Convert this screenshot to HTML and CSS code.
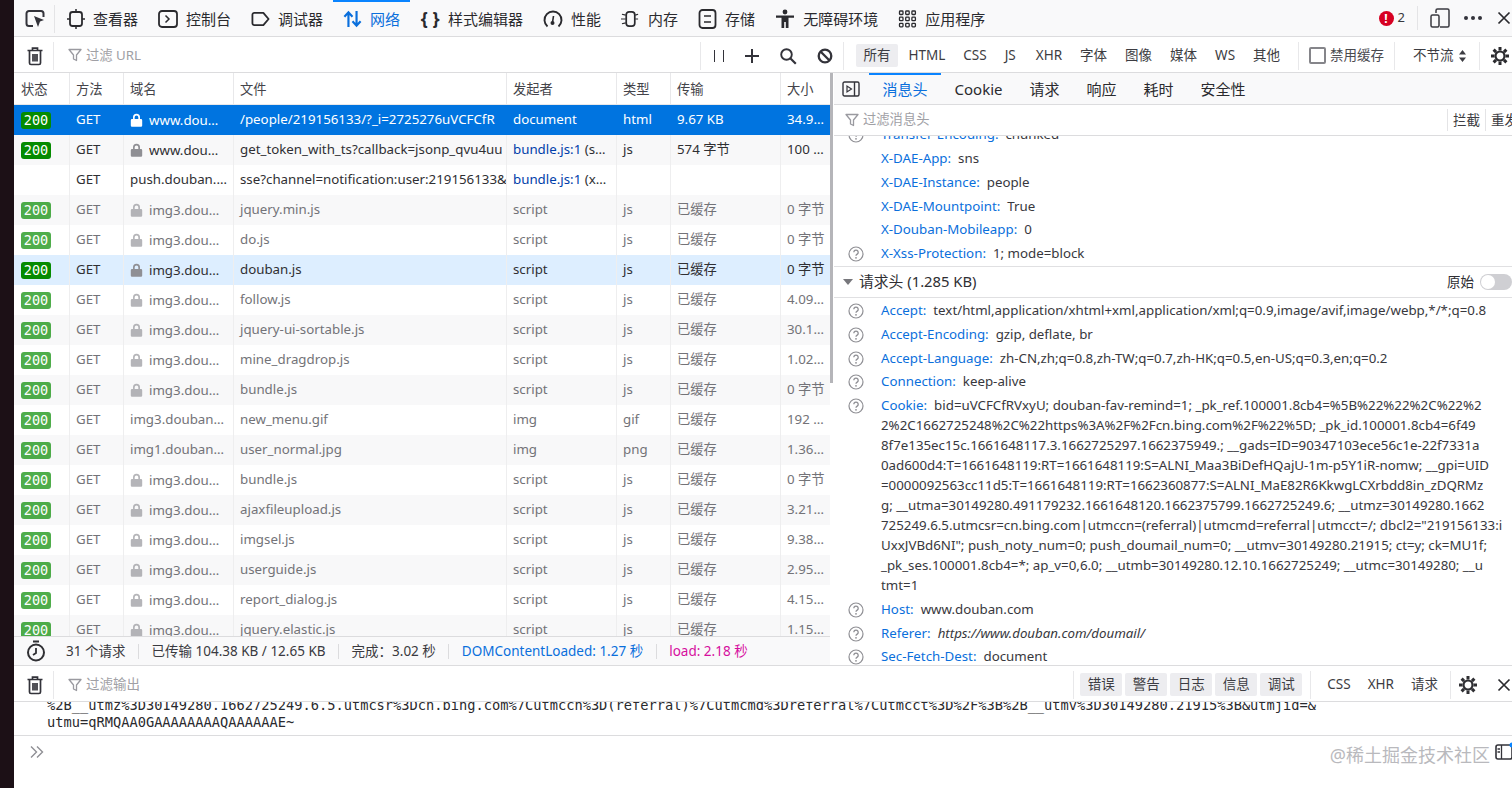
FILE: index.html
```html
<!DOCTYPE html>
<html lang="zh-CN">
<head>
<meta charset="utf-8">
<title>网络</title>
<link rel="stylesheet" href="styles.css">
</head>
<body>
<svg class="defs" width="0" height="0">
  <symbol id="lock" viewBox="0 0 13 14"><path d="M3 6V4.2a3.5 3.5 0 0 1 7 0V6h1a1.2 1.2 0 0 1 1.2 1.2v5.3A1.3 1.3 0 0 1 11 13.8H2A1.3 1.3 0 0 1 .8 12.500V7.200A1.200 1.200 0 0 1 2 6zm1.700 0h3.600V4.200a1.800 1.800 0 0 0-3.600 0z" fill="currentColor" fill-rule="evenodd"/></symbol>
  <symbol id="help" viewBox="0 0 16 16"><circle cx="8" cy="8" r="7" fill="none" stroke="currentColor" stroke-width="1.200"/><path d="M5.800 6.200a2.200 2.200 0 1 1 3.400 1.900c-.8.5-1.200.9-1.200 1.700" fill="none" stroke="currentColor" stroke-width="1.300"/><circle cx="8" cy="11.800" r=".9" fill="currentColor"/></symbol>
  <symbol id="funnel" viewBox="0 0 14 14"><path d="M1 1.500h12L8.500 7v5.500l-3-1.500V7z" fill="none" stroke="currentColor" stroke-width="1.300" stroke-linejoin="round"/></symbol>
  <symbol id="trash" viewBox="0 0 18 20"><path d="M1.500 4.500h15M6.500 4V2.200h5V4M3.500 5v12a1.500 1.500 0 0 0 1.500 1.500h8a1.500 1.500 0 0 0 1.500-1.500V5M7 8v7.500M9 8v7.500M11 8v7.500" fill="none" stroke="currentColor" stroke-width="1.700"/></symbol>
  <symbol id="gear" viewBox="0 0 20 20"><path d="M10 1v3.500M10 15.500V19M1 10h3.500M15.500 10H19M3.600 3.600l2.500 2.500M13.900 13.900l2.500 2.500M3.600 16.400l2.500-2.500M13.900 6.100l2.500-2.500" stroke="currentColor" stroke-width="3" fill="none"/><circle cx="10" cy="10" r="4.500" fill="none" stroke="currentColor" stroke-width="2.200"/></symbol>
  <symbol id="close" viewBox="0 0 14 14"><path d="M1.500 1.500l11 11M12.500 1.500l-11 11" stroke="currentColor" stroke-width="1.700" fill="none"/></symbol>
</svg>
<div class="page">
  <div class="edge"></div>
  <main class="devtools">
    <nav class="tabsbar">
      <span class="pick"><svg width="21" height="20" viewBox="0 0 21 20"><path d="M8 17H4a2.500 2.500 0 0 1-2.500-2.500v-10A2.500 2.500 0 0 1 4 2h12a2.500 2.500 0 0 1 2.500 2.500V8" fill="none" stroke="currentColor" stroke-width="2"/><path d="M9 7l10 4-4 1.600L13 18z" fill="currentColor"/></svg></span>
      <a class="tab"><svg width="18" height="22" viewBox="0 0 18 22"><rect x="3" y="4" width="12" height="14" rx="2.500" fill="none" stroke="currentColor" stroke-width="1.800"/><path d="M9 1v3M9 18v3M0 11h3M15 11h3" stroke="currentColor" stroke-width="1.500"/></svg>查看器</a>
      <a class="tab"><svg width="20" height="18" viewBox="0 0 20 18"><rect x="1" y="1" width="18" height="16" rx="3" fill="none" stroke="currentColor" stroke-width="1.800"/><path d="M7.500 5.500L11 9l-3.500 3.500" fill="none" stroke="currentColor" stroke-width="1.500"/></svg>控制台</a>
      <a class="tab"><svg width="19" height="16" viewBox="0 0 20 16"><path d="M3.500 1.500h9.500l5.500 6.500-5.500 6.500H3.500a2 2 0 0 1-2-2v-9a2 2 0 0 1 2-2z" fill="none" stroke="currentColor" stroke-width="1.900" stroke-linejoin="round"/></svg>调试器</a>
      <a class="tab active"><svg width="19" height="18" viewBox="0 0 21 20"><path d="M6 19V3M1.500 7.500L6 2.500l4.500 5M15 1v16M10.500 12.500l4.500 5 4.500-5" fill="none" stroke="currentColor" stroke-width="2.400"/></svg>网络</a>
      <a class="tab"><span class="braces">{ }</span>样式编辑器</a>
      <a class="tab"><svg width="20" height="18" viewBox="0 0 20 18"><path d="M4.500 16.500a8.500 8.500 0 1 1 11 0" fill="none" stroke="currentColor" stroke-width="1.900"/><path d="M10.500 6l-1 6.500" stroke="currentColor" stroke-width="1.600"/><circle cx="9.500" cy="13" r="2" fill="currentColor"/></svg>性能</a>
      <a class="tab"><svg width="19" height="18" viewBox="0 0 20 18"><rect x="5.500" y="1.500" width="9" height="15" rx="3" fill="none" stroke="currentColor" stroke-width="1.800"/><path d="M1 4l4 1M0 9h5M1 14l4-1M15 5l3-1M15 9h3" stroke="currentColor" stroke-width="1.300"/></svg>内存</a>
      <a class="tab"><svg width="19" height="20" viewBox="0 0 18 20"><rect x="1" y="1" width="16" height="18" rx="3" fill="none" stroke="currentColor" stroke-width="1.800"/><path d="M5.500 7h7M5.500 13h7" stroke="currentColor" stroke-width="1.600"/></svg>存储</a>
      <a class="tab"><svg width="20" height="20" viewBox="0 0 18 20"><circle cx="9" cy="3" r="2.400" fill="currentColor"/><path d="M0 6.500h18v2.300h-5.500V19h-2.700v-6H8.200v6H5.500V8.800H0z" fill="currentColor"/></svg>无障碍环境</a>
      <a class="tab"><svg width="19" height="18" viewBox="0 0 18 18"><g fill="none" stroke="currentColor" stroke-width="1.300"><rect x="1" y="1" width="3.500" height="3.500" rx=".8"/><rect x="7.200" y="1" width="3.500" height="3.500" rx=".8"/><rect x="13.400" y="1" width="3.500" height="3.500" rx=".8"/><rect x="1" y="7.200" width="3.500" height="3.500" rx=".8"/><rect x="7.200" y="7.200" width="3.500" height="3.500" rx=".8"/><rect x="13.400" y="7.200" width="3.500" height="3.500" rx=".8"/><rect x="1" y="13.400" width="3.500" height="3.500" rx=".8"/><rect x="7.200" y="13.400" width="3.500" height="3.500" rx=".8"/><rect x="13.400" y="13.400" width="3.500" height="3.500" rx=".8"/></g></svg>应用程序</a>
      <span class="tabs-end">
        <span class="errors"><i class="err">!</i>2</span>
        <span class="sep"></span>
        <svg class="win" width="20" height="20" viewBox="0 0 20 20"><path d="M6 5V2.500A1.500 1.500 0 0 1 7.500 1h10A1.500 1.500 0 0 1 19 2.500v15a1.500 1.500 0 0 1-1.500 1.500H10" fill="none" stroke="currentColor" stroke-width="1.500"/><rect x="1" y="7" width="8" height="12" rx="1.500" fill="none" stroke="currentColor" stroke-width="1.500"/></svg>
        <span class="dots"><i></i><i></i><i></i></span>
        <svg class="x" width="14" height="14"><use href="#close"/></svg>
      </span>
    </nav>

    <div class="netbar">
      <span class="trash-cell"><svg width="18" height="20"><use href="#trash"/></svg></span>
      <span class="filter"><svg width="14" height="14"><use href="#funnel"/></svg>过滤 URL</span>
      <span class="actions">
        <span class="pause"><i></i><i></i></span>
        <svg width="16" height="16" viewBox="0 0 16 16"><path d="M8 1v14M1 8h14" stroke="currentColor" stroke-width="2"/></svg>
        <svg width="18" height="18" viewBox="0 0 18 18"><circle cx="7.500" cy="7.500" r="5.300" fill="none" stroke="currentColor" stroke-width="1.900"/><path d="M11.500 11.500l5.300 5.300" stroke="currentColor" stroke-width="2.200"/></svg>
        <svg width="16" height="16" viewBox="0 0 16 16"><circle cx="8" cy="8" r="6.300" fill="none" stroke="currentColor" stroke-width="2.300"/><path d="M3.500 3.500l9 9" stroke="currentColor" stroke-width="2.300"/></svg>
      </span>
      <span class="types">
        <b class="on">所有</b><b>HTML</b><b>CSS</b><b>JS</b><b>XHR</b><b>字体</b><b>图像</b><b>媒体</b><b>WS</b><b>其他</b>
      </span>
      <label class="cache"><i class="check"></i>禁用缓存</label>
      <span class="throttle">不节流<svg width="7" height="12" viewBox="0 0 7 12"><path d="M3.500 0L7 4.500H0zM3.500 12L0 7.500h7z" fill="currentColor"/></svg></span>
      <span class="gear-cell"><svg width="20" height="20"><use href="#gear"/></svg></span>
    </div>

    <div class="split">
      <section class="requests">
        <div class="cols head">
          <span>状态</span><span>方法</span><span>域名</span><span>文件</span><span>发起者</span><span>类型</span><span>传输</span><span>大小</span>
        </div>
        <div class="rows">
          <div class="cols row selected"><span><em class="code">200</em></span><span>GET</span><span class="dom"><svg width="13" height="14"><use href="#lock"/></svg><u>www.douban.com</u></span><span class="file">/people/219156133/?_i=2725276uVCFCfR</span><span>document</span><span>html</span><span>9.67 KB</span><span>34.9 KB</span></div>
          <div class="cols row"><span><em class="code">200</em></span><span>GET</span><span class="dom"><svg width="13" height="14"><use href="#lock"/></svg><u>www.douban.com</u></span><span class="file">get_token_with_ts?callback=jsonp_qvu4uu</span><span><a class="link">bundle.js:1</a> (script)</span><span>js</span><span>574 字节</span><span>100 字节</span></div>
          <div class="cols row"><span></span><span>GET</span><span>push.douban.com:4397</span><span class="file">sse?channel=notification:user:219156133&amp;</span><span><a class="link">bundle.js:1</a> (xhr)</span><span></span><span></span><span></span></div>
          <div class="cols row cached"><span><em class="code">200</em></span><span>GET</span><span class="dom"><svg width="13" height="14"><use href="#lock"/></svg><u>img3.doubanio.com</u></span><span class="file">jquery.min.js</span><span>script</span><span>js</span><span>已缓存</span><span>0 字节</span></div>
          <div class="cols row cached"><span><em class="code">200</em></span><span>GET</span><span class="dom"><svg width="13" height="14"><use href="#lock"/></svg><u>img3.doubanio.com</u></span><span class="file">do.js</span><span>script</span><span>js</span><span>已缓存</span><span>0 字节</span></div>
          <div class="cols row hover"><span><em class="code">200</em></span><span>GET</span><span class="dom"><svg width="13" height="14"><use href="#lock"/></svg><u>img3.doubanio.com</u></span><span class="file">douban.js</span><span>script</span><span>js</span><span>已缓存</span><span>0 字节</span></div>
          <div class="cols row cached"><span><em class="code">200</em></span><span>GET</span><span class="dom"><svg width="13" height="14"><use href="#lock"/></svg><u>img3.doubanio.com</u></span><span class="file">follow.js</span><span>script</span><span>js</span><span>已缓存</span><span>4.09 KB</span></div>
          <div class="cols row cached"><span><em class="code">200</em></span><span>GET</span><span class="dom"><svg width="13" height="14"><use href="#lock"/></svg><u>img3.doubanio.com</u></span><span class="file">jquery-ui-sortable.js</span><span>script</span><span>js</span><span>已缓存</span><span>30.1 KB</span></div>
          <div class="cols row cached"><span><em class="code">200</em></span><span>GET</span><span class="dom"><svg width="13" height="14"><use href="#lock"/></svg><u>img3.doubanio.com</u></span><span class="file">mine_dragdrop.js</span><span>script</span><span>js</span><span>已缓存</span><span>1.02 KB</span></div>
          <div class="cols row cached"><span><em class="code">200</em></span><span>GET</span><span class="dom"><svg width="13" height="14"><use href="#lock"/></svg><u>img3.doubanio.com</u></span><span class="file">bundle.js</span><span>script</span><span>js</span><span>已缓存</span><span>0 字节</span></div>
          <div class="cols row cached"><span><em class="code">200</em></span><span>GET</span><span>img3.doubanio.com</span><span class="file">new_menu.gif</span><span>img</span><span>gif</span><span>已缓存</span><span>192 字节</span></div>
          <div class="cols row cached"><span><em class="code">200</em></span><span>GET</span><span>img1.doubanio.com</span><span class="file">user_normal.jpg</span><span>img</span><span>png</span><span>已缓存</span><span>1.36 KB</span></div>
          <div class="cols row cached"><span><em class="code">200</em></span><span>GET</span><span class="dom"><svg width="13" height="14"><use href="#lock"/></svg><u>img3.doubanio.com</u></span><span class="file">bundle.js</span><span>script</span><span>js</span><span>已缓存</span><span>0 字节</span></div>
          <div class="cols row cached"><span><em class="code">200</em></span><span>GET</span><span class="dom"><svg width="13" height="14"><use href="#lock"/></svg><u>img3.doubanio.com</u></span><span class="file">ajaxfileupload.js</span><span>script</span><span>js</span><span>已缓存</span><span>3.21 KB</span></div>
          <div class="cols row cached"><span><em class="code">200</em></span><span>GET</span><span class="dom"><svg width="13" height="14"><use href="#lock"/></svg><u>img3.doubanio.com</u></span><span class="file">imgsel.js</span><span>script</span><span>js</span><span>已缓存</span><span>9.38 KB</span></div>
          <div class="cols row cached"><span><em class="code">200</em></span><span>GET</span><span class="dom"><svg width="13" height="14"><use href="#lock"/></svg><u>img3.doubanio.com</u></span><span class="file">userguide.js</span><span>script</span><span>js</span><span>已缓存</span><span>2.95 KB</span></div>
          <div class="cols row cached"><span><em class="code">200</em></span><span>GET</span><span class="dom"><svg width="13" height="14"><use href="#lock"/></svg><u>img3.doubanio.com</u></span><span class="file">report_dialog.js</span><span>script</span><span>js</span><span>已缓存</span><span>4.15 KB</span></div>
          <div class="cols row cached"><span><em class="code">200</em></span><span>GET</span><span class="dom"><svg width="13" height="14"><use href="#lock"/></svg><u>img3.doubanio.com</u></span><span class="file">jquery.elastic.js</span><span>script</span><span>js</span><span>已缓存</span><span>1.15 KB</span></div>
        </div>
        <footer class="summary">
          <svg width="20" height="22" viewBox="0 0 20 22"><circle cx="10" cy="12.500" r="8" fill="none" stroke="currentColor" stroke-width="2"/><path d="M7 1.500h6M10 8v5l-3 2" fill="none" stroke="currentColor" stroke-width="1.800"/></svg>
          <span class="stat first">31 个请求</span>
          <span class="stat">已传输 104.38 KB / 12.65 KB</span>
          <span class="stat">完成：3.02 秒</span>
          <span class="stat blue">DOMContentLoaded: 1.27 秒</span>
          <span class="stat pink">load: 2.18 秒</span>
        </footer>
      </section>
      <div class="scroll"><i></i></div>
      <section class="details">
        <div class="dtabs">
          <svg class="sidebar" width="18" height="16" viewBox="0 0 18 16"><rect x="1" y="1" width="16" height="14" rx="1.500" fill="none" stroke="currentColor" stroke-width="1.400"/><path d="M12.500 1v14" stroke="currentColor" stroke-width="1.400"/><path d="M5 5v6l4.500-3z" fill="none" stroke="currentColor" stroke-width="1.200"/></svg>
          <a class="dtab active">消息头</a><a class="dtab">Cookie</a><a class="dtab">请求</a><a class="dtab">响应</a><a class="dtab">耗时</a><a class="dtab">安全性</a>
        </div>
        <div class="dfilter">
          <span class="filter"><svg width="14" height="14"><use href="#funnel"/></svg>过滤消息头</span>
          <span class="dbtn">拦截</span><span class="dbtn">重发</span>
        </div>
        <div class="headers">
          <div class="clip">
            <div class="h first-h"><svg class="q" width="16" height="16"><use href="#help"/></svg><span class="k">Transfer-Encoding:</span><span class="v">chunked</span></div>
            <div class="h"><span class="k">X-DAE-App:</span><span class="v">sns</span></div>
            <div class="h"><span class="k">X-DAE-Instance:</span><span class="v">people</span></div>
            <div class="h"><span class="k">X-DAE-Mountpoint:</span><span class="v">True</span></div>
            <div class="h"><span class="k">X-Douban-Mobileapp:</span><span class="v">0</span></div>
            <div class="h"><svg class="q" width="16" height="16"><use href="#help"/></svg><span class="k">X-Xss-Protection:</span><span class="v">1; mode=block</span></div>
          </div>
          <div class="section"><i class="tri"></i>请求头 (1.285 KB)<span class="raw">原始<i class="toggle"></i></span></div>
          <div class="h"><svg class="q" width="16" height="16"><use href="#help"/></svg><span class="k">Accept:</span><span class="v">text/html,application/xhtml+xml,application/xml;q=0.9,image/avif,image/webp,*/*;q=0.8</span></div>
          <div class="h"><svg class="q" width="16" height="16"><use href="#help"/></svg><span class="k">Accept-Encoding:</span><span class="v">gzip, deflate, br</span></div>
          <div class="h"><svg class="q" width="16" height="16"><use href="#help"/></svg><span class="k">Accept-Language:</span><span class="v">zh-CN,zh;q=0.8,zh-TW;q=0.7,zh-HK;q=0.5,en-US;q=0.3,en;q=0.2</span></div>
          <div class="h"><svg class="q" width="16" height="16"><use href="#help"/></svg><span class="k">Connection:</span><span class="v">keep-alive</span></div>
          <div class="h cookie"><svg class="q" width="16" height="16"><use href="#help"/></svg><p><span class="k">Cookie:</span><span class="v">bid=uVCFCfRVxyU; douban-fav-remind=1; _pk_ref.100001.8cb4=%5B%22%22%2C%22%2<br>2%2C1662725248%2C%22https%3A%2F%2Fcn.bing.com%2F%22%5D; _pk_id.100001.8cb4=6f49<br>8f7e135ec15c.1661648117.3.1662725297.1662375949.; __gads=ID=90347103ece56c1e-22f7331a<br>0ad600d4:T=1661648119:RT=1661648119:S=ALNI_Maa3BiDefHQajU-1m-p5Y1iR-nomw; __gpi=UID<br>=0000092563cc11d5:T=1661648119:RT=1662360877:S=ALNI_MaE82R6KkwgLCXrbdd8in_zDQRMz<br>g; __utma=30149280.491179232.1661648120.1662375799.1662725249.6; __utmz=30149280.1662<br>725249.6.5.utmcsr=cn.bing.com|utmccn=(referral)|utmcmd=referral|utmcct=/; dbcl2="219156133:i<br>UxxJVBd6NI"; push_noty_num=0; push_doumail_num=0; __utmv=30149280.21915; ct=y; ck=MU1f;<br>_pk_ses.100001.8cb4=*; ap_v=0,6.0; __utmb=30149280.12.10.1662725249; __utmc=30149280; __u<br>tmt=1</span></p></div>
          <div class="h"><svg class="q" width="16" height="16"><use href="#help"/></svg><span class="k">Host:</span><span class="v">www.douban.com</span></div>
          <div class="h"><svg class="q" width="16" height="16"><use href="#help"/></svg><span class="k">Referer:</span><span class="v it">https://www.douban.com/doumail/</span></div>
          <div class="h"><svg class="q" width="16" height="16"><use href="#help"/></svg><span class="k">Sec-Fetch-Dest:</span><span class="v">document</span></div>
        </div>
      </section>
    </div>

    <div class="conbar">
      <span class="trash-cell"><svg width="18" height="20"><use href="#trash"/></svg></span>
      <span class="filter"><svg width="14" height="14"><use href="#funnel"/></svg>过滤输出</span>
      <span class="levels"><b>错误</b><b>警告</b><b>日志</b><b>信息</b><b>调试</b></span>
      <span class="kinds"><b>CSS</b><b>XHR</b><b>请求</b></span>
      <svg class="congear" width="20" height="20"><use href="#gear"/></svg>
      <svg class="x" width="14" height="14"><use href="#close"/></svg>
    </div>
    <div class="output">
      <pre class="line clipped">%2B__utmz%3D30149280.1662725249.6.5.utmcsr%3Dcn.bing.com%7Cutmccn%3D(referral)%7Cutmcmd%3Dreferral%7Cutmcct%3D%2F%3B%2B__utmv%3D30149280.21915%3B&amp;utmjid=&amp;</pre>
      <pre class="line">utmu=qRMQAA0GAAAAAAAAQAAAAAAE~</pre>
    </div>
    <div class="input">
      <svg width="16" height="14" viewBox="0 0 16 14"><path d="M2 1.500L7.500 7 2 12.500M8 1.500L13.500 7 8 12.500" fill="none" stroke="currentColor" stroke-width="1.400"/></svg>
      <span class="mark">@稀土掘金技术社区</span>
      <svg class="split-ic" width="18" height="16" viewBox="0 0 18 16"><rect x="1" y="1" width="16" height="14" rx="2" fill="none" stroke="currentColor" stroke-width="1.600"/><path d="M6.500 1v14M2.500 5h2.500M2.500 8h2.500" stroke="currentColor" stroke-width="1.300"/><circle cx="17" cy="1" r="2.500" fill="#0a84ff"/></svg>
    </div>
  </main>
</div>
</body>
</html>
```
FILE: styles.css
```css
* { box-sizing: border-box; }
html, body { margin: 0; height: 100%; overflow: hidden; }
body { font: 13.3px/1.2 "Noto Sans", "Noto Sans CJK SC", sans-serif; color: #2f2f33; background: #fff; }
.defs { position: absolute; }
svg { flex: none; display: block; }
i, em, u, b { font-style: normal; text-decoration: none; font-weight: 400; }
.page { display: flex; height: 788px; }
.edge { width: 14px; flex: none; background: #1c1016; }
.devtools { flex: 1; min-width: 0; display: flex; flex-direction: column; }

.tabsbar { height: 37px; flex: none; display: flex; align-items: center; background: #f9f9fa; border-bottom: 1px solid #dcdcde; color: #2a2a2e; font-size: 15px; overflow: hidden; }
.pick { width: 41px; height: 28px; margin: 2px 2px 0 0; padding-left: 11px; display: flex; align-items: center; border-right: 1px solid #e4e4e6; color: #33333a; flex: none; }
.tab { height: 36px; display: flex; align-items: center; gap: 8px; padding: 2px 10px 0; white-space: nowrap; position: relative; color: #2a2a2e; flex: none; }
.tab.active { color: #0a6fdc; }
.tab.active::before { content: ""; position: absolute; left: 0; right: 0; top: 0; height: 2px; background: #0a84ff; }
.braces { font-weight: 700; font-size: 18px; width: 20px; white-space: nowrap; text-align: center; }
.tabs-end { margin-left: auto; display: flex; align-items: center; flex: none; }
.errors { display: flex; align-items: center; gap: 4px; color: #38383d; font-size: 13px; }
.err { width: 15px; height: 15px; border-radius: 50%; background: #d70022; color: #fff; font-weight: 700; font-size: 12px; line-height: 15px; text-align: center; }
.sep { width: 1px; height: 24px; background: #e4e4e6; margin: 0 12px; }
.win { color: #3a3a40; }
.dots { display: flex; gap: 3px; margin: 0 15px 0 14px; }
.dots i { width: 4px; height: 4px; border-radius: 50%; background: #33333a; }
.x { color: #2a2a2e; }
.tabs-end .x { margin-right: 1px; }

.netbar { height: 36px; padding-top: 2px; flex: none; display: flex; align-items: center; background: #fff; border-bottom: 1px solid #dcdcde; overflow: hidden; }
.trash-cell { width: 40px; height: 28px; flex: none; display: flex; align-items: center; padding-left: 12px; border-right: 1px solid #e8e8ea; color: #33333a; }
.filter { display: flex; align-items: center; gap: 4px; color: #a0a0a5; padding-left: 14px; white-space: nowrap; }
.filter svg { color: #9a9aa0; }
.netbar .filter { width: 646px; flex: none; }
.actions { height: 28px; width: 144px; flex: none; display: flex; align-items: center; justify-content: space-between; padding: 0 10px 0 13px; border: solid #e8e8ea; border-width: 0 1px; color: #33333a; }
.pause { display: flex; gap: 8px; }
.pause i { width: 1px; height: 12px; background: #33333a; }
.types { display: flex; align-items: center; width: 455px; flex: none; padding-left: 12px; height: 28px; color: #3c3c42; border-right: 1px solid #e8e8ea; font-size: 13.500px; }
.types b { padding: 0 7.500px; height: 23px; line-height: 23px; border-radius: 2px; margin-right: 3px; white-space: nowrap; }
.types b:nth-child(4) { margin-right: 5px; }
.types b.on { background: #ededf0; }
.cache { display: flex; align-items: center; gap: 4px; width: 96px; flex: none; padding-left: 10px; height: 28px; color: #4a4a4f; border-right: 1px solid #e8e8ea; white-space: nowrap; font-size: 13.500px; }
.check { width: 17px; height: 17px; flex: none; border: 2px solid #85858a; border-radius: 2px; }
.throttle { display: flex; align-items: center; gap: 5px; width: 85px; flex: none; padding-left: 18px; height: 28px; color: #3c3c42; border-right: 1px solid #e8e8ea; white-space: nowrap; font-size: 13.500px; }
.gear-cell { padding-left: 10px; color: #2a2a2e; flex: none; }

.split { flex: none; height: 592px; display: flex; }
.requests { width: 816px; flex: none; display: flex; flex-direction: column; min-height: 0; }
.cols { display: grid; grid-template-columns: 55px 54px 110px 273px 110px 54px 110px 50px; }
.cols > span { min-width: 0; overflow: hidden; white-space: nowrap; text-overflow: ellipsis; padding: 0 5px 0 6px; }
.cols > .file { text-overflow: clip; padding-right: 1px; }
.head { height: 32px; flex: none; background: #fff; border-bottom: 1px solid #e8e8ea; align-items: center; color: #44444a; }
.head > span { height: 31px; line-height: 32px; border-left: 1px solid #e8e8ea; }
.head > span:first-child { border-left: 0; padding-left: 7px; }
.rows { flex: 1; min-height: 0; overflow: hidden; }
.row { height: 30px; align-items: center; background: #fff; }
.row:nth-child(even) { background: #f8f8f9; }
.row > span { height: 30px; line-height: 29px; border-left: 1px solid #eeeeef; }
.row > span:last-child { padding-right: 3px; }
.row > span:first-child { border-left: 0; padding-left: 7px; }
.row > span:nth-child(3) { padding-right: 6px; }
.row > .dom { display: flex; align-items: center; gap: 6px; padding-left: 6px; }
.row > span.dom:nth-child(3) { padding-right: 11px; }
.dom svg { color: #8f8f94; }
.dom u { overflow: hidden; text-overflow: ellipsis; }
.code { display: inline-block; width: 30px; height: 17px; text-align: center; border-radius: 3px; background: #058b00; color: #fff; font: 13.500px/17px "DejaVu Sans Mono", monospace; vertical-align: middle; }
.link { color: #003eaa; }
.cached { color: #737378; }
.cached .code { opacity: .7; }
.cached .dom svg { opacity: .65; }
.row.hover { background: #ddeeff; color: #2f2f33; }
.row.selected { background: #0074e0; color: #fff; }
.row.selected > span { border-left-color: transparent; }
.selected .dom svg { color: #fff; }
.summary { height: 29px; flex: none; display: flex; align-items: center; padding-left: 12px; background: #f9f9fa; border-top: 1px solid #dcdcde; color: #3a3a40; font-size: 13.500px; }
.summary svg { margin-right: 20px; color: #2f2f33; }
.stat { padding: 0 12.500px; height: 15px; line-height: 15px; border-right: 1px solid #dcdcde; white-space: nowrap; }
.stat.first { padding-left: 0; }
.stat:last-child { border: 0; }
.blue { color: #0a6fdc; }
.pink { color: #d60f9e; }
.scroll { width: 4px; flex: none; background: #fff; position: relative; }
.scroll i { position: absolute; left: 0; width: 3px; top: 0; height: 310px; background: #b5b5b9; }

.details { flex: 1; min-width: 0; display: flex; flex-direction: column; overflow: hidden; }
.dtabs { height: 32px; flex: none; display: flex; align-items: center; background: #f9f9fa; border-bottom: 1px solid #dcdcde; font-size: 15px; padding-left: 8px; color: #2a2a2e; }
.sidebar { margin-right: 9px; color: #33333a; }
.dtab { height: 31px; line-height: 33px; padding: 0 13.500px; position: relative; white-space: nowrap; }
.dtab.active { color: #0a6fdc; }
.dtab.active::before { content: ""; position: absolute; left: 0; right: 0; top: 0; height: 2px; background: #0a84ff; }
.dfilter { height: 31px; flex: none; display: flex; align-items: center; border-bottom: 1px solid #dcdcde; background: #fff; position: relative; z-index: 1; overflow: hidden; }
.dfilter .filter { width: 613px; flex: none; padding-left: 11px; }
.dbtn { padding: 0 5px; height: 22px; line-height: 22px; border-left: 1px solid #e4e4e6; white-space: nowrap; color: #3c3c42; flex: none; font-size: 13.500px; }
.headers { flex: 1; min-height: 0; overflow: hidden; margin-top: -12.600px; }
.clip { padding-bottom: .6px; }
.h { position: relative; min-height: 23.700px; line-height: 23.700px; padding-left: 47px; white-space: nowrap; }
.q { position: absolute; left: 14px; top: 4px; color: #8f8f94; }
.k { color: #0a6fdc; margin-right: 7px; }
.v { color: #38383d; }
.it { font-style: italic; }
.cookie { line-height: 20px; padding-top: 1px; padding-bottom: 3px; }
.cookie p { margin: 0; }
.section { height: 32px; margin-bottom: 1px; display: flex; align-items: center; gap: 6px; padding-left: 9px; font-size: 14.800px; border: solid #e0e0e2; border-width: 1px 0; color: #2f2f33; }
.tri { width: 0; height: 0; border: 5px solid transparent; border-top: 6px solid #77777c; border-bottom: 0; }
.raw { margin-left: auto; display: flex; align-items: center; gap: 6px; font-size: 13.500px; }
.toggle { display: flex; align-items: center; width: 32px; height: 16px; padding-left: 1px; border-radius: 8px; background: #cfcfd3; }
.toggle::before { content: ""; width: 14px; height: 14px; border-radius: 50%; background: #fff; }

.conbar { height: 37px; padding-top: 2px; flex: none; display: flex; align-items: center; background: #fff; border-top: 1px solid #dcdcde; border-bottom: 1px solid #dcdcde; font-size: 13.500px; overflow: hidden; }
.conbar .filter { flex: 1; }
.levels { display: flex; gap: 3px; height: 28px; align-items: center; padding: 0 8px 0 6px; border: solid #e8e8ea; border-width: 0 1px; flex: none; }
.levels b { width: 42px; height: 23px; line-height: 23px; text-align: center; background: #ededf0; border-radius: 2px; color: #3c3c42; }
.kinds { display: flex; gap: 17px; height: 28px; align-items: center; padding: 0 12px 0 16px; border-right: 1px solid #e8e8ea; color: #3c3c42; flex: none; }
.congear { margin: 0 19px 0 7px; }
.conbar .x { margin-right: 1px; }
.output { height: 34px; flex: none; overflow: hidden; border-bottom: 1px solid #dcdcde; padding-left: 33px; }
.line { margin: 0; font: 13.700px/17px "DejaVu Sans Mono", monospace; color: #2a2a2e; white-space: pre; }
.clipped { margin-top: -5px; }
.input { flex: none; height: 52px; display: flex; align-items: center; padding: 0 0 21px 15px; color: #8f8f94; }
.mark { margin-left: auto; margin-top: 8px; color: #b9b9bd; font-size: 18px; white-space: nowrap; }
.split-ic { margin: 0 -1px 0 5px; color: #33333a; overflow: visible; }
```
